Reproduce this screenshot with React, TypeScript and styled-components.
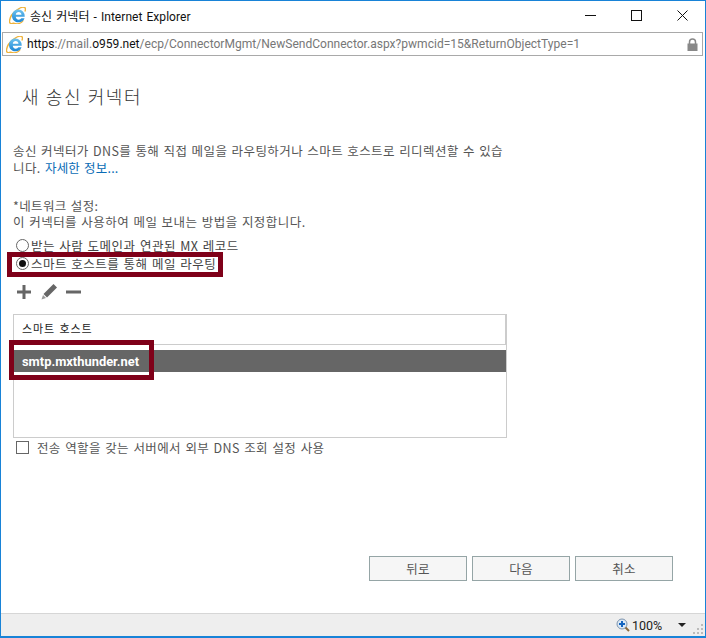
import React from "react";
import styled, { createGlobalStyle } from "styled-components";

const Global = createGlobalStyle`
  html, body { margin: 0; padding: 0; background: #fff; }
  #root { width: 706px; height: 638px; }
  * { box-sizing: border-box; }
`;
const KFONT = `"Noto Sans CJK KR", "Open Sans", sans-serif`;
const UIFONT = `Roboto, "Noto Sans CJK KR", sans-serif`;

const Win = styled.div`
  position: relative; width: 706px; height: 638px; background: #fff;
  border: solid #1883d7; border-width: 1px 1px 2px 1px;
  display: flex; flex-direction: column; overflow: hidden;
  font-family: ${KFONT};
`;
const TitleBar = styled.div`
  height: 29px; display: flex; align-items: center; padding-left: 8px; flex: none;
`;
const TitleText = styled.div`
  margin-left: 4px; font-size: 12px; color: #111; font-family: ${UIFONT}; letter-spacing: .05px; white-space: pre; word-spacing: 1px;
`;
const Controls = styled.div`
  margin-left: auto; display: flex; align-items: center;
`;
const Ctl = styled.div`
  width: 46px; height: 29px; display: flex; align-items: center; justify-content: center;
`;
const Address = styled.div`
  height: 24px; margin: 2px 2px 0 1px; flex: none; border: 1px solid #a9a9a9; display: flex; align-items: center;
  padding: 0 4px 0 3px; font-family: Roboto, sans-serif; font-size: 12.05px; color: #777;
`;
const Strong = styled.span`color: #111;`;
const Url = styled.div`margin-left: 4px; white-space: pre;`;
const Lock = styled.div`margin-left: auto; display: flex;`;
const Content = styled.div`
  flex: 1; padding: 0 0 0 12px; display: flex; flex-direction: column; min-height: 0;
`;
const Heading = styled.h1`
  margin: 27px 0 0 9px; font-weight: 300; font-size: 18px; line-height: 26px; color: #333; letter-spacing: 1.6px;
  font-family: ${KFONT};
`;
const Para = styled.p`
  margin: 33px 0 0; width: 494px; font-size: 12.5px; line-height: 17px; color: #555; letter-spacing: .42px; word-spacing: 1px;
  word-break: break-all;
`;
const Link = styled.span`color: #0a6cb5; letter-spacing: .2px;`;
const Label = styled.div`
  margin-top: 21px; font-size: 12.5px; line-height: 17px; color: #555; letter-spacing: .36px; word-spacing: 1px;
`;
const Second = styled.div`
  font-size: 12.5px; line-height: 16px; color: #555; letter-spacing: .46px; word-spacing: 1px;
`;
const Options = styled.div`margin-top: 6px; display: flex; flex-direction: column;`;
const Opt = styled.div`
  height: 18px; display: flex; align-items: center; padding-left: 3px; gap: 2px;
  font-size: 12.5px; color: #444; letter-spacing: .5px; word-spacing: 1px;
`;
const Radio = styled.div`
  position: relative; width: 13px; height: 13px; border-radius: 50%; border: 1px solid #666; background: #fff; flex: none;
  display: flex; align-items: center; justify-content: center;
`;
const Dot = styled.div`width: 7px; height: 7px; border-radius: 50%; background: #111;`;
const Tools = styled.div`
  margin-top: 9px; height: 21px; display: flex; align-items: center; gap: 8px; padding-left: 3px;
`;
const Table = styled.div`
  position: relative; margin-top: 12px; width: 494px; height: 124px; border: 1px solid #ccc;
  display: flex; flex-direction: column;
`;
const Head = styled.div`
  height: 30px; flex: none; border-bottom: 1px solid #ccc; border-right: 1px solid #ccc;
  font-size: 11px; color: #222; padding: 0 0 3px 8px; display: flex; align-items: center; letter-spacing: .9px; word-spacing: 1px;
`;
const Row = styled.div`
  margin-top: 5px; height: 22px; background: #666; color: #fff; font-family: Roboto, sans-serif; font-weight: 700; font-size: 12.9px;
  display: flex; align-items: center; padding-left: 8px;
`;
const Check = styled.div`
  display: flex; align-items: center; gap: 8px; margin-top: 2px; padding-left: 3px; height: 15px;
  font-size: 12.5px; color: #555; letter-spacing: .34px; word-spacing: 1.4px;
`;
const Box = styled.div`width: 13px; height: 13px; border: 1px solid #666; background: #fff; flex: none;`;
const Buttons = styled.div`
  margin-top: 101px; display: flex; gap: 5px; padding-left: 356px;
`;
const Btn = styled.button`
  width: 98px; height: 25px; border: 1px solid #95a5a6; background: #f6f6f6; color: #555; padding: 0;
  font-family: ${KFONT}; font-size: 12.5px; letter-spacing: .3px;
`;
const Status = styled.div`
  height: 23px; flex: none; background: #eee; border-top: 1px solid #d6d6d6; display: flex; align-items: center; position: relative;
  padding-left: 615px; font-family: Roboto, sans-serif; font-size: 12.5px; color: #222; margin-top: auto;
`;
const Zoom = styled.span`margin-left: 2px;`;
const Caret = styled.div`
  margin-left: 16px; width: 0; height: 0; border-left: 4px solid transparent; border-right: 4px solid transparent; border-top: 4px solid #222;
`;
const Grip = styled.svg`position: absolute; right: 1px; bottom: 1px;`;
const Mark = styled.div<{ $x: number; $y: number; $w: number; $h: number }>`
  position: absolute; left: ${p => p.$x}px; top: ${p => p.$y}px; width: ${p => p.$w}px; height: ${p => p.$h}px;
  border: 5px solid #7f0019; pointer-events: none;
`;

const IELogo = ({ s }: { s: number }) => (
  <svg width={s} height={s} viewBox="0 0 20 20">
    <defs>
      <linearGradient id="iee" x1="0" y1="0" x2="0" y2="1">
        <stop offset="0" stopColor="#6fc3ee" />
        <stop offset="1" stopColor="#1c86d6" />
      </linearGradient>
    </defs>
    <path d="M16.800 15.800c-3 4.200-8 4.700-11.500 3.300C2.200 20.300.3 19.300.6 16.400.9 13 4 7.700 8.400 4.300 12.800.8 16.800-.5 18.600.7c1 .7 1 2.300.1 4.500" fill="none" stroke="#efb23a" strokeWidth="1.600" />
    <path d="M11 3a7.500 7.500 0 0 1 7.500 8.500H8c.1 2.100 1.500 3.400 3.400 3.400 1.500 0 2.500-.7 3-1.700h3.900C17.300 16.300 14.600 18 11.300 18 7 18 3.500 15 3.500 10.500S7 3 11 3Zm-3 6h6.700c-.2-1.900-1.500-3-3.300-3S8.200 7.100 8 9Z" fill="url(#iee)" />
  </svg>
);

export default function App() {
  return (
    <Win>
      <Global />
      <TitleBar>
        <IELogo s={17} />
        <TitleText>송신 커넥터 - Internet Explorer</TitleText>
        <Controls>
          <Ctl><svg width="11" height="11"><path d="M0 5.500h11" stroke="#111" /></svg></Ctl>
          <Ctl><svg width="11" height="11"><rect x=".5" y=".5" width="10" height="10" fill="none" stroke="#111" /></svg></Ctl>
          <Ctl><svg width="11" height="11"><path d="M.5.500l10 10M10.500.500l-10 10" stroke="#111" /></svg></Ctl>
        </Controls>
      </TitleBar>
      <Address>
        <IELogo s={17} />
        <Url><Strong>https</Strong>://mail.<Strong>o959.net</Strong>/ecp/ConnectorMgmt/NewSendConnector.aspx?pwmcid=15&amp;ReturnObjectType=1</Url>
        <Lock>
          <svg width="11" height="13" viewBox="0 0 11 13"><path d="M2.500 6V4a3 3 0 0 1 6 0v2" fill="none" stroke="#888" strokeWidth="1.500" /><rect x="0.500" y="5.500" width="10" height="7.500" fill="#888" /></svg>
        </Lock>
      </Address>
      <Content>
        <Heading>새 송신 커넥터</Heading>
        <Para>송신 커넥터가 DNS를 통해 직접 메일을 라우팅하거나 스마트 호스트로 리디렉션할 수 있습니다. <Link>자세한 정보...</Link></Para>
        <Label>*네트워크 설정:</Label>
        <Second>이 커넥터를 사용하여 메일 보내는 방법을 지정합니다.</Second>
        <Options>
          <Opt><Radio /><span>받는 사람 도메인과 연관된 MX 레코드</span></Opt>
          <Opt><Radio><Dot /></Radio><span>스마트 호스트를 통해 메일 라우팅</span></Opt>
        </Options>
        <Tools>
          <svg width="16" height="16" viewBox="0 0 16 16"><path d="M6.500 1h3v5.500H15v3H9.500V15h-3V9.500H1v-3h5.500z" fill="#666" /></svg>
          <svg width="18" height="18" viewBox="0 0 18 18"><path d="M13.500 1l3.500 3.500-10 10-3.500-3.500z" fill="#666" /><path d="M3 12l3 3-4.500 1.500z" fill="#999" /></svg>
          <svg width="15" height="16" viewBox="0 0 15 16"><rect x="0" y="6.500" width="15" height="3" fill="#666" /></svg>
        </Tools>
        <Table>
          <Head>스마트 호스트</Head>
          <Row>smtp.mxthunder.net</Row>
        </Table>
        <Check><Box /><span>전송 역할을 갖는 서버에서 외부 DNS 조회 설정 사용</span></Check>
        <Buttons>
          <Btn>뒤로</Btn>
          <Btn>다음</Btn>
          <Btn>취소</Btn>
        </Buttons>
      </Content>
      <Status>
        <svg width="14" height="14" viewBox="0 0 14 14"><circle cx="6" cy="6" r="5" fill="#dbe8f5" stroke="#7d94ad" /><path d="M5 3h2v2h2v2H7v2H5V7H3V5h2z" fill="#1465c0" /><path d="M9.500 9.500l3.500 3.500" stroke="#8a6a3c" strokeWidth="2" /></svg>
        <Zoom>100%</Zoom>
        <Caret />
        <Grip width="11" height="11" viewBox="0 0 11 11"><g fill="#bbb"><rect x="8" y="0" width="2" height="2" /><rect x="4" y="4" width="2" height="2" /><rect x="8" y="4" width="2" height="2" /><rect x="0" y="8" width="2" height="2" /><rect x="4" y="8" width="2" height="2" /><rect x="8" y="8" width="2" height="2" /></g></Grip>
      </Status>
      <Mark $x={6} $y={251} $w={216} $h={25} />
      <Mark $x={8} $y={339} $w={145} $h={40} />
    </Win>
  );
}
